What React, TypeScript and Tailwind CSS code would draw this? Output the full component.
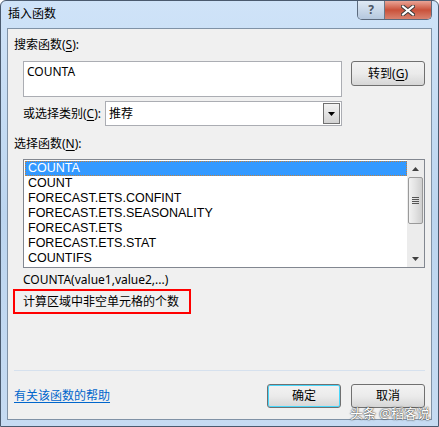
const U = ({ c }: { c: string }) => <span className="underline underline-offset-2">{c}</span>;

const rows = [
  'COUNTA',
  'COUNT',
  'FORECAST.ETS.CONFINT',
  'FORECAST.ETS.SEASONALITY',
  'FORECAST.ETS',
  'FORECAST.ETS.STAT',
  'COUNTIFS',
];

const btn =
  'flex items-center justify-center rounded-[3px] border border-[#707070] bg-gradient-to-b from-[#f2f2f2] via-[#ebebeb] to-[#d6d6d6] text-[12px] text-black';

export default function App() {
  return (
    <div
      className="relative w-[439px] h-[427px] overflow-hidden rounded-t-[6px] border border-[#4a5a6e] bg-gradient-to-b from-[#cfe3f8] via-[#bcd5ef] to-[#c6dbf2] text-[12px] text-black"
      style={{ fontFamily: '"Noto Sans", "Noto Sans CJK SC", sans-serif' }}
    >
      {/* title bar */}
      <div className="flex h-[27px] items-start justify-between">
        <div className="pl-[7px] pt-[5px] text-[12px] leading-[16px] text-black">插入函数</div>
        <div className="mr-[6px] flex h-[19px] overflow-hidden rounded-b-[5px] border border-t-0 border-[#5c6b7e]">
          <div className="flex w-[27px] items-center justify-center border-r border-[#6a7888] bg-gradient-to-b from-[#dfe9f4] to-[#b5c8de] text-[12px] font-bold text-[#4b5563]">
            ?
          </div>
          <div className="flex w-[46px] items-center justify-center bg-gradient-to-b from-[#e9a496] via-[#c9513a] to-[#d8826f]">
            <svg width="14" height="11" viewBox="0 0 14 11">
              <path d="M2 1.5 L12 9.5 M12 1.5 L2 9.5" stroke="#3b3b3b" strokeWidth="4" strokeLinecap="square" />
              <path d="M2 1.5 L12 9.5 M12 1.5 L2 9.5" stroke="#ffffff" strokeWidth="2" strokeLinecap="square" />
            </svg>
          </div>
        </div>
      </div>

      {/* client area */}
      <div className="mx-[6px] h-[392px] border border-[#8092a6] bg-[#f0f0f0]">
        <div className="flex flex-col pl-[6px] pr-[6px]">
          <div className="mt-[8px] h-[16px] leading-[16px]">
            搜索函数(<U c="S" />):
          </div>

          <div className="mt-[8px] flex items-start">
            <div className="ml-[9px] h-[36px] w-[319px] border border-[#abadb3] bg-white px-[3px] pt-[2px] leading-[16px]">
              COUNTA
            </div>
            <div className={`${btn} ml-[9px] h-[25px] w-[74px]`}>
              转到(<U c="G" />)
            </div>
          </div>

          <div className="mt-[4px] flex items-center">
            <div className="ml-[9px] w-[82px] leading-[16px]">
              或选择类别(<U c="C" />):
            </div>
            <div className="flex h-[25px] w-[237px] border border-[#abadb3] bg-white">
              <div className="flex-1 pl-[3px] leading-[23px]">推荐</div>
              <div className="m-[1px] flex w-[17px] items-center justify-center border border-[#707070] bg-gradient-to-b from-[#f3f3f3] to-[#d3d3d3]">
                <svg width="7" height="4" viewBox="0 0 7 4">
                  <path d="M0 0 H7 L3.5 4 Z" fill="#000" />
                </svg>
              </div>
            </div>
          </div>

          <div className="mt-[10px] h-[16px] leading-[16px]">
            选择函数(<U c="N" />):
          </div>

          <div className="ml-[9px] mt-[7px] flex h-[109px] w-[402px] border border-[#828790] bg-white">
            <div className="flex-1 pl-[1px] pt-[1px] text-[12.5px]" style={{ fontFamily: '"Liberation Sans", sans-serif' }}>
              {rows.map((r, i) => (
                <div
                  key={r}
                  className={
                    i === 0
                      ? 'h-[15px] border border-dotted border-[#c5813a] bg-[#3399ff] pl-[2px] leading-[13px] text-white'
                      : 'h-[15px] pl-[3px] leading-[15px]'
                  }
                >
                  {r}
                </div>
              ))}
            </div>
            <div className="flex w-[17px] flex-col items-center bg-[#ececec]">
              <div className="flex h-[17px] items-center justify-center">
                <svg width="7" height="4" viewBox="0 0 7 4">
                  <path d="M0 4 H7 L3.5 0 Z" fill="#404040" />
                </svg>
              </div>
              <div className="flex h-[47px] w-[15px] items-center justify-center rounded-[2px] border border-[#9a9a9a] bg-gradient-to-r from-[#f2f2f2] via-[#e2e2e2] to-[#cfcfcf]">
                <svg width="7" height="7" viewBox="0 0 7 7">
                  <path d="M0 0.5 H7 M0 2.5 H7 M0 4.5 H7 M0 6.5 H7" stroke="#555" strokeWidth="1" />
                </svg>
              </div>
              <div className="flex-1" />
              <div className="flex h-[17px] items-center justify-center">
                <svg width="7" height="4" viewBox="0 0 7 4">
                  <path d="M0 0 H7 L3.5 4 Z" fill="#404040" />
                </svg>
              </div>
            </div>
          </div>

          <div className="ml-[9px] mt-[4px] h-[16px] leading-[16px]">COUNTA(value1,value2,...)</div>

          <div className="-ml-[1px] mt-[1px] flex h-[25px] w-[178px] items-center border-2 border-[#ff0000] pl-[8px]">
            计算区域中非空单元格的个数
          </div>

          <div className="mt-[56px] h-px w-[411px] bg-[#d6e1ee]" />

          <div className="mt-[13px] flex items-center justify-between">
            <span className="text-[#0066cc] underline underline-offset-2">有关该函数的帮助</span>
            <div className="flex gap-[10px]">
              <div className={`${btn} h-[24px] w-[74px] border-[#3c7fb1] shadow-[inset_0_0_0_1px_#48d7fb]`}>确定</div>
              <div className={`${btn} h-[24px] w-[74px]`}>取消</div>
            </div>
          </div>
        </div>
      </div>

      <div
        className="absolute bottom-[6px] right-[8px] text-[13px] leading-[14px] text-white"
        style={{ textShadow: '0 0 2px #333, 0 0 1px #333' }}
      >
        头条 @稻客说
      </div>
    </div>
  );
}
